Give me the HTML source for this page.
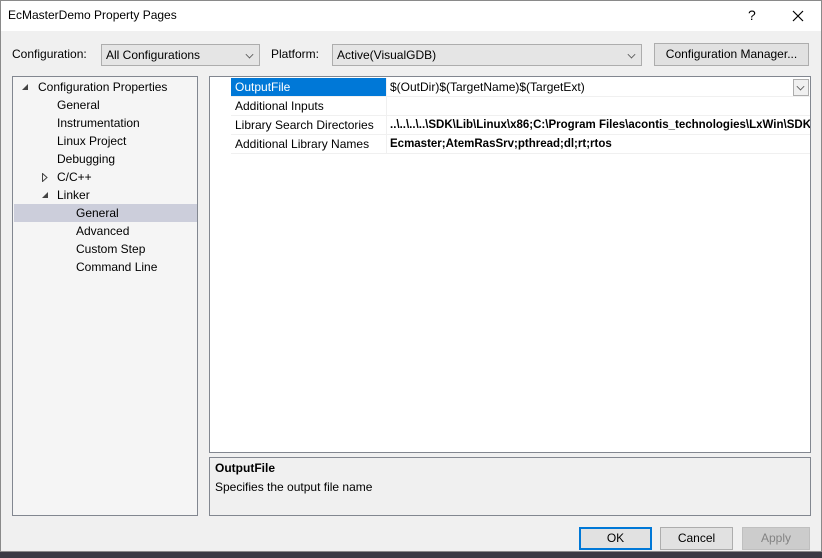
<!DOCTYPE html>
<html><head><style>
*{margin:0;padding:0;box-sizing:border-box}
body{width:822px;height:558px;background:#3a3a44;font-family:"Liberation Sans",sans-serif;font-size:12px;color:#000;position:relative;overflow:hidden}
.win{position:absolute;left:0;top:0;width:822px;height:552px;background:#f0f0f0}
.frame{position:absolute;left:0;top:0;width:822px;height:552px;border:1px solid #8a8a8a;pointer-events:none}
.title{position:absolute;left:0;top:0;width:822px;height:31px;background:#fff}
.a{position:absolute;white-space:nowrap}
.combo{position:absolute;background:#e5e5e5;border:1px solid #adadad;height:22px;line-height:20px;padding-left:4px;white-space:nowrap}
.btn{position:absolute;background:#e1e1e1;border:1px solid #adadad;text-align:center;line-height:20px;white-space:nowrap}
.chev{position:absolute;right:6px;top:6px;width:7px;height:7px;border-right:1px solid #555;border-bottom:1px solid #555;transform:rotate(45deg) scale(.8)}
.panel{position:absolute;border:1px solid #828790}
.row{position:absolute;height:18px;line-height:18px;white-space:nowrap}
.g{position:absolute;left:21px;width:580px;height:19px;border-bottom:1px solid #f0f0f0;overflow:hidden}
</style></head><body>
<div class="win">
<div class="title"></div>
<div class="a" style="left:8px;top:8px">EcMasterDemo Property Pages</div>
<div class="a" style="left:748px;top:7px;font-size:14px">?</div>
<svg class="a" style="left:792px;top:10px" width="12" height="12"><path d="M1 1L11 11M11 1L1 11" stroke="#000" stroke-width="1.2"/></svg>

<div class="a" style="left:12px;top:47px">Configuration:</div>
<div class="combo" style="left:101px;top:44px;width:159px">All Configurations<div class="chev"></div></div>
<div class="a" style="left:271px;top:47px">Platform:</div>
<div class="combo" style="left:332px;top:44px;width:310px">Active(VisualGDB)<div class="chev"></div></div>
<div class="btn" style="left:654px;top:43px;width:155px;height:23px">Configuration Manager...</div>

<div class="panel" style="left:12px;top:76px;width:186px;height:440px;background:#f5f5f5">
<svg class="a" style="left:9px;top:7px" width="7" height="7"><path d="M6 0L6 6L0 6Z" fill="#444"/></svg>
<div class="row" style="left:25px;top:1px">Configuration Properties</div>
<div class="row" style="left:44px;top:19px">General</div>
<div class="row" style="left:44px;top:37px">Instrumentation</div>
<div class="row" style="left:44px;top:55px">Linux Project</div>
<div class="row" style="left:44px;top:73px">Debugging</div>
<svg class="a" style="left:29px;top:96px" width="6" height="9"><path d="M0.5 0.5L5 4.5L0.5 8.5Z" fill="none" stroke="#444"/></svg>
<div class="row" style="left:44px;top:91px">C/C++</div>
<svg class="a" style="left:29px;top:115px" width="7" height="7"><path d="M6 0L6 6L0 6Z" fill="#444"/></svg>
<div class="row" style="left:44px;top:109px">Linker</div>
<div class="row" style="left:1px;top:127px;width:183px;background:#cccedb"></div>
<div class="row" style="left:63px;top:127px">General</div>
<div class="row" style="left:63px;top:145px">Advanced</div>
<div class="row" style="left:63px;top:163px">Custom Step</div>
<div class="row" style="left:63px;top:181px">Command Line</div>
</div>

<div class="panel" style="left:209px;top:76px;width:602px;height:377px;background:#fff;overflow:hidden">
<div class="g" style="top:1px;overflow:visible"><div class="row" style="left:0;top:0;width:155px;background:#0078d7;color:#fff;padding-left:4px">OutputFile</div><div class="row" style="left:159px;top:0">$(OutDir)$(TargetName)$(TargetExt)</div>
<div class="a" style="left:562px;top:1px;width:16px;height:17px;border:1px solid #adadad;background:#f0f0f0"><div class="chev" style="right:4px;top:3px"></div></div></div>
<div class="g" style="top:20px"><div class="row" style="left:4px">Additional Inputs</div></div>
<div class="g" style="top:39px"><div class="row" style="left:4px">Library Search Directories</div><div class="row" style="left:159px;font-weight:bold;font-size:11.5px">..\..\..\..\SDK\Lib\Linux\x86;C:\Program Files\acontis_technologies\LxWin\SDK</div></div>
<div class="g" style="top:58px"><div class="row" style="left:4px">Additional Library Names</div><div class="row" style="left:159px;font-weight:bold;font-size:11.5px">Ecmaster;AtemRasSrv;pthread;dl;rt;rtos</div></div>
<div class="a" style="left:176px;top:1px;width:1px;height:76px;background:#f0f0f0"></div>
</div>

<div class="panel" style="left:209px;top:457px;width:602px;height:59px;background:#f0f0f0">
<div class="a" style="left:5px;top:3px;font-weight:bold">OutputFile</div>
<div class="a" style="left:5px;top:22px">Specifies the output file name</div>
</div>

<div class="btn" style="left:579px;top:527px;width:73px;height:23px;border:2px solid #0078d7;line-height:19px">OK</div>
<div class="btn" style="left:660px;top:527px;width:73px;height:23px">Cancel</div>
<div class="btn" style="left:742px;top:527px;width:68px;height:23px;background:#ccc;border-color:#bfbfbf;color:#838383">Apply</div>
</div>
<div class="frame"></div>
</body></html>
